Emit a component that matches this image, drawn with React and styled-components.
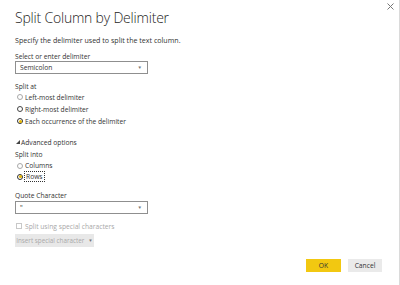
import React from "react";
import styled, { createGlobalStyle } from "styled-components";

const Global = createGlobalStyle`
  html, body { margin: 0; padding: 0; background: #fff; }
  body { font-family: "Open Sans", "Noto Sans", sans-serif; color: #333; }
  * { box-sizing: border-box; }
`;

const Dialog = styled.div`
  position: relative;
  width: 400px;
  height: 285px;
  background: #fff;
  border-right: 1px solid #dadada;
  display: flex;
  flex-direction: column;
  padding-left: 15px;
`;

const Header = styled.div`
  display: flex;
  justify-content: space-between;
  align-items: flex-start;
`;

const Title = styled.h1`
  margin: 8px 0 0 0;
  font-size: 14px;
  line-height: 20px;
  font-weight: 300;
  color: #252423;
  letter-spacing: -0.2px;
`;

const Close = styled.button`
  margin: 2px 5px 0 0;
  width: 8px;
  height: 8px;
  padding: 0;
  border: none;
  background: transparent;
  display: flex;
  align-items: center;
  justify-content: center;
`;

const Text = styled.div`
  font-size: ${(p) => p.size || 6.7}px;
  line-height: ${(p) => p.lh || 10}px;
  height: ${(p) => p.lh || 10}px;
  margin-top: ${(p) => p.mt || 0}px;
  color: ${(p) => (p.disabled ? "#a8a8a8" : "#333")};
  white-space: nowrap;
`;

const Select = styled.div`
  width: 133px;
  height: 13px;
  border: 1px solid #8f8f8f;
  display: flex;
  align-items: center;
  justify-content: space-between;
  padding: 0 5px 0 4px;
  font-size: 6.7px;
  color: #333;
  margin-top: ${(p) => p.mt || 0}px;
`;

const Caret = styled.span`
  font-size: 4.5px;
  color: #777;
  line-height: 1;
`;

const RadioGroup = styled.div`
  display: flex;
  flex-direction: column;
  margin-top: ${(p) => p.mt || 0}px;
`;

const RadioRow = styled.div`
  height: ${(p) => p.h}px;
  display: flex;
  align-items: center;
  gap: 2px;
  padding-left: 2px;
  font-size: 6.7px;
  color: #333;
  white-space: nowrap;
`;

const Circle = styled.span`
  width: 6px;
  height: 6px;
  border-radius: 50%;
  border: 1px solid ${(p) => p.ring};
  display: flex;
  align-items: center;
  justify-content: center;
  flex-shrink: 0;
  &::after {
    content: "";
    width: 3px;
    height: 3px;
    border-radius: 50%;
    background: ${(p) => (p.checked ? "#e8b800" : "transparent")};
  }
`;

const Focus = styled.span`
  outline: 1px dotted #333;
  outline-offset: 0px;
  padding: 0 1px;
  line-height: 9px;
`;

const Expander = styled.div`
  display: flex;
  align-items: center;
  gap: 1px;
  height: 10px;
  margin-top: ${(p) => p.mt}px;
  font-size: 6.7px;
  color: #333;
  padding-left: 1px;
`;

const CheckRow = styled.div`
  display: flex;
  align-items: center;
  gap: 3px;
  height: 10px;
  margin-top: ${(p) => p.mt}px;
  font-size: 6.7px;
  color: #a8a8a8;
  white-space: nowrap;
`;

const Box = styled.span`
  width: 6px;
  height: 6px;
  border: 1px solid #c8c8c8;
  margin-left: 1px;
`;

const InsertButton = styled.button`
  align-self: flex-start;
  margin-top: ${(p) => p.mt}px;
  width: 79px;
  height: 13px;
  border: none;
  background: #e8e8e8;
  color: #a8a8a8;
  font-family: inherit;
  font-size: 6.3px;
  display: flex;
  align-items: center;
  justify-content: center;
  gap: 4px;
  padding: 0;
  white-space: nowrap;
`;

const Footer = styled.div`
  display: flex;
  justify-content: flex-end;
  gap: 7px;
  padding-right: 17px;
  margin-top: 12px;
`;

const Button = styled.button`
  width: ${(p) => p.w}px;
  height: 13px;
  border: none;
  padding: 0;
  font-family: inherit;
  font-size: 6.7px;
  color: #333;
  background: ${(p) => (p.primary ? "#f2c811" : "#eaeaea")};
`;

export default function App() {
  return (
    <>
      <Global />
      <Dialog>
        <Header>
          <Title>Split Column by Delimiter</Title>
          <Close aria-label="Close">
            <svg width="7" height="7" viewBox="0 0 7 7">
              <path d="M0.5 0.5L6.5 6.5M6.5 0.5L0.5 6.5" stroke="#777" strokeWidth="1" />
            </svg>
          </Close>
        </Header>
        <Text size={7.1} mt={7}>Specify the delimiter used to split the text column.</Text>
        <Text lh={8} mt={8}>Select or enter delimiter</Text>
        <Select>
          <span>Semicolon</span>
          <Caret>▼</Caret>
        </Select>
        <Text lh={8} mt={9}>Split at</Text>
        <RadioGroup>
          <RadioRow h={12}><Circle ring="#a8a8a8" />Left-most delimiter</RadioRow>
          <RadioRow h={12}><Circle ring="#444" />Right-most delimiter</RadioRow>
          <RadioRow h={12}><Circle ring="#333" checked />Each occurrence of the delimiter</RadioRow>
        </RadioGroup>
        <Expander mt={10}>
          <svg width="4" height="4" viewBox="0 0 4 4"><path d="M4 0L4 4L0 4Z" fill="#444" /></svg>
          Advanced options
        </Expander>
        <Text mt={3}>Split into</Text>
        <RadioGroup>
          <RadioRow h={11}><Circle ring="#a8a8a8" />Columns</RadioRow>
          <RadioRow h={11}><Circle ring="#333" checked /><Focus>Rows</Focus></RadioRow>
        </RadioGroup>
        <Text mt={9}>Quote Character</Text>
        <Select>
          <span>"</span>
          <Caret>▼</Caret>
        </Select>
        <CheckRow mt={7}><Box />Split using special characters</CheckRow>
        <InsertButton mt={3}>Insert special character <Caret>▼</Caret></InsertButton>
        <Footer>
          <Button primary w={35}>OK</Button>
          <Button w={34}>Cancel</Button>
        </Footer>
      </Dialog>
    </>
  );
}
